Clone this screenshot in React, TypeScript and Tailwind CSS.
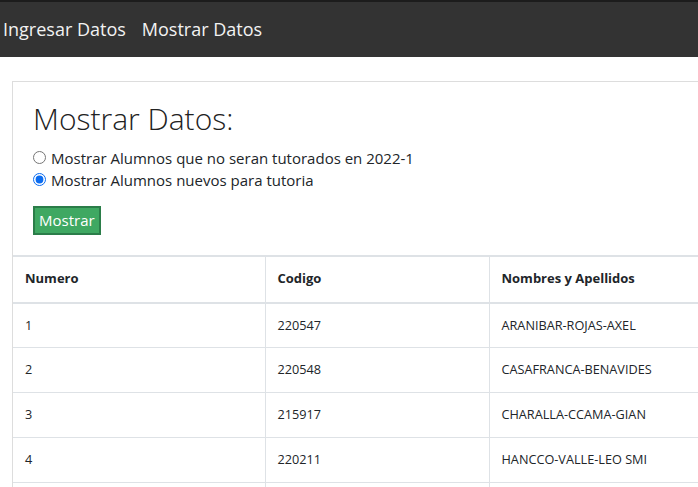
const rows = [
  { n: '1', code: '220547', name: 'ARANIBAR-ROJAS-AXEL' },
  { n: '2', code: '220548', name: 'CASAFRANCA-BENAVIDES' },
  { n: '3', code: '215917', name: 'CHARALLA-CCAMA-GIAN' },
  { n: '4', code: '220211', name: 'HANCCO-VALLE-LEO SMI' },
];

export default function App() {
  return (
    <div className="h-screen overflow-hidden bg-white font-['Open_Sans',sans-serif] text-[#212529]">
      <header className="h-[57px] bg-[#333] border-t-2 border-[#1c1c1c] flex items-center gap-4 pl-[3px] text-[18px] text-[#f2f2f2]">
        <a href="#">Ingresar Datos</a>
        <a href="#">Mostrar Datos</a>
      </header>

      <main className="mt-6 ml-3 w-[720px] border border-[#ddd]">
        <div className="px-5 pt-[18px] pb-5">
          <h1 className="text-[30px] font-light leading-tight text-[#222]">Mostrar Datos:</h1>
          <div className="mt-[9px] text-[15px] leading-[22px]">
            <label className="flex items-center gap-[5px]">
              <input type="radio" name="opt" className="m-0 w-[13px] h-[13px]" />
              Mostrar Alumnos que no seran tutorados en 2022-1
            </label>
            <label className="flex items-center gap-[5px]">
              <input type="radio" name="opt" defaultChecked className="m-0 w-[13px] h-[13px] accent-[#0b6cf0]" />
              Mostrar Alumnos nuevos para tutoria
            </label>
          </div>
          <button className="mt-[15px] px-[4px] h-[29px] bg-[#3fa862] border-2 border-[#2b7d49] text-white text-[15px]">
            Mostrar
          </button>
        </div>

        <table className="w-full border-collapse text-[12.7px] text-left">
          <thead>
            <tr className="h-[47px] border-t-2 border-b-2 border-[#dee2e6] text-[13px]">
              <th className="w-[252px] px-3 font-bold">Numero</th>
              <th className="w-[224px] px-3 font-bold border-l border-[#dee2e6]">Codigo</th>
              <th className="px-3 font-bold border-l border-[#dee2e6]">Nombres y Apellidos</th>
            </tr>
          </thead>
          <tbody>
            {rows.map((r) => (
              <tr key={r.n} className="h-[45px] border-b border-[#dee2e6]">
                <td className="px-3">{r.n}</td>
                <td className="px-3 border-l border-[#dee2e6]">{r.code}</td>
                <td className="px-3 border-l border-[#dee2e6]">{r.name}</td>
              </tr>
            ))}
            <tr className="h-[45px] border-b border-[#dee2e6]">
              <td className="px-3"></td>
              <td className="px-3 border-l border-[#dee2e6]"></td>
              <td className="px-3 border-l border-[#dee2e6]"></td>
            </tr>
          </tbody>
        </table>
      </main>
    </div>
  );
}
